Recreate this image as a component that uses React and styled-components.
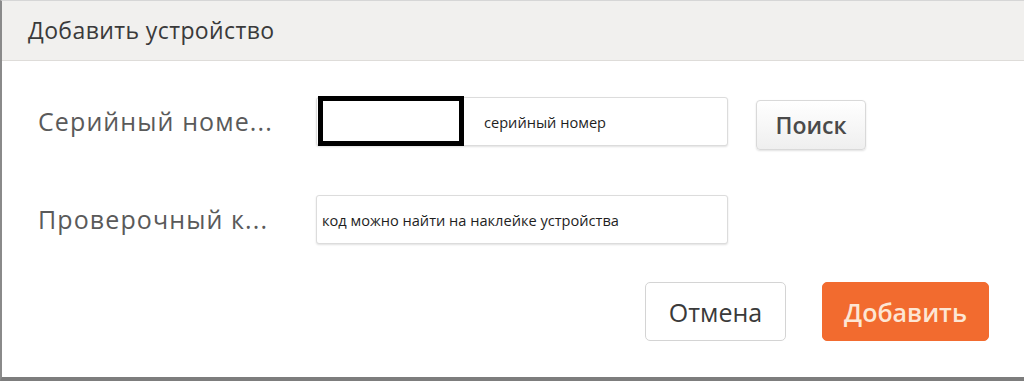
import React from 'react'
import styled, { createGlobalStyle } from 'styled-components'

const GlobalStyle = createGlobalStyle`
  html, body {
    margin: 0;
    padding: 0;
    background: #ffffff;
  }
  body {
    font-family: 'Open Sans', 'Noto Sans', 'DejaVu Sans', sans-serif;
  }
`

const Dialog = styled.div`
  width: 1024px;
  height: 381px;
  box-sizing: border-box;
  border-left: 2px solid #8a8a8a;
  border-bottom: 4px solid #7d7d7d;
  border-top: 1px solid #d6d6d6;
  background: #fff;
  display: flex;
  flex-direction: column;
`

const Header = styled.div`
  height: 60px;
  box-sizing: border-box;
  background: #f1f0ee;
  border-bottom: 1px solid #dedcd9;
  display: flex;
  align-items: center;
  padding-left: 26px;
`

const Title = styled.h1`
  margin: 0 0 2px;
  font-size: 23px;
  font-weight: 400;
  color: #3a3a3a;
  letter-spacing: 0.4px;
`

const Body = styled.div`
  display: grid;
  grid-template-columns: 252px 412px auto;
  column-gap: 28px;
  row-gap: 45px;
  align-items: start;
  padding: 36px 0 0 34px;
`

const Label = styled.div`
  font-size: 25px;
  line-height: 34px;
  letter-spacing: 1.1px;
  color: #5a5a5a;
  white-space: nowrap;
  margin-top: 7px;
  padding-left: 2px;
`

const Field = styled.div`
  height: 49px;
  box-sizing: border-box;
  border: 1px solid #dcdcdc;
  border-radius: 3px;
  box-shadow: 0 1px 2px rgba(0, 0, 0, 0.12);
  background: #fff;
  display: flex;
  align-items: center;
  font-size: 14.6px;
  color: #1e1e1e;
  padding-left: ${p => p.$pad || 0}px;
`

const Redact = styled.span`
  width: 146px;
  height: 50px;
  box-sizing: border-box;
  border: 5px solid #000;
  background: #fff;
  margin-left: 1px;
  margin-right: 20px;
  margin-top: -1px;
`

const SearchButton = styled.button`
  width: 110px;
  height: 50px;
  margin-top: 3px;
  justify-self: start;
  font-family: inherit;
  font-size: 23px;
  font-weight: 600;
  color: #4a4a4a;
  background: linear-gradient(#ffffff, #efefef);
  border: 1px solid #d9d9d9;
  border-radius: 4px;
  box-shadow: 0 1px 2px rgba(0, 0, 0, 0.12);
`

const Footer = styled.div`
  display: flex;
  justify-content: flex-end;
  gap: 36px;
  padding: 38px 35px 0 0;
`

const ActionButton = styled.button`
  height: 59px;
  width: ${p => p.$w}px;
  box-sizing: border-box;
  font-family: inherit;
  font-size: 25px;
  font-weight: ${p => (p.$primary ? 600 : 400)};
  color: ${p => (p.$primary ? '#fde6d4' : '#3a3a3a')};
  background: ${p => (p.$primary ? '#f26b2f' : '#ffffff')};
  border: 1px solid ${p => (p.$primary ? '#f26b2f' : '#d4d4d4')};
  border-radius: 5px;
`

export default function App () {
  return (
    <>
      <GlobalStyle />
      <Dialog>
        <Header>
          <Title>Добавить устройство</Title>
        </Header>
        <Body>
          <Label>Серийный номе...</Label>
          <Field>
            <Redact />
            серийный номер
          </Field>
          <SearchButton>Поиск</SearchButton>
          <Label>Проверочный к...</Label>
          <Field $pad={5}>код можно найти на наклейке устройства</Field>
          <div />
        </Body>
        <Footer>
          <ActionButton $w={141}>Отмена</ActionButton>
          <ActionButton $w={167} $primary>Добавить</ActionButton>
        </Footer>
      </Dialog>
    </>
  )
}
